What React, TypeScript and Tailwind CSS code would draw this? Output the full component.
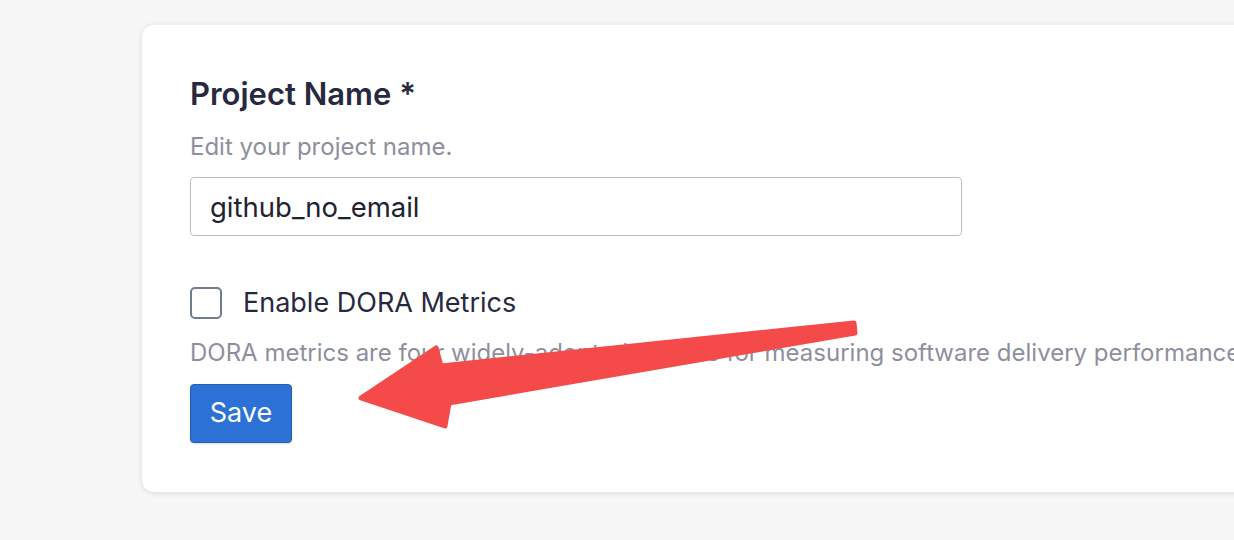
import React from "react";

export default function App() {
  return (
    <div className="relative w-[1234px] h-[540px] overflow-hidden bg-[#f7f7f7] pt-[25px] pl-[142px] font-['Inter',sans-serif]">
      <div className="w-[1200px] h-[467px] rounded-[12px] bg-white shadow-[0_1px_6px_rgba(0,0,0,0.12)] pl-[48px] pt-[50px]">
        <h2 className="text-[31px] leading-[38px] font-semibold text-[#272a3f]">Project Name *</h2>
        <p className="mt-[19px] text-[24px] leading-[30px] text-[#8e8f9c]">Edit your project name.</p>
        <input
          readOnly
          value="github_no_email"
          className="mt-[15px] block w-[772px] h-[59px] rounded-[4px] border border-[#b8bcc4] px-[19px] text-[27.5px] text-[#1f2230] outline-none"
        />
        <label className="mt-[51px] flex items-center gap-[21px]">
          <span className="block w-[32px] h-[32px] rounded-[5px] border-2 border-[#6f7c91] bg-white" />
          <span className="text-[27px] leading-[32px] text-[#272a3f]">Enable DORA Metrics</span>
        </label>
        <p className="mt-[19px] whitespace-nowrap text-[24px] leading-[30px] text-[#8e8f9c]">
          DORA metrics are four widely-adopted metrics for measuring software delivery performance.
        </p>
        <button className="mt-[16px] block h-[59px] w-[102px] rounded-[4px] border border-[#245fb4] bg-[#2c72d6] text-[27px] text-white shadow-[0_1px_2px_rgba(0,0,0,0.15)]">
          Save
        </button>
      </div>

      {/* annotation arrow */}
      <svg className="absolute left-0 top-0 pointer-events-none" width="1234" height="540">
        <polygon
          points="854,323 855,333 449,403 445,426 361,398 436,348 441,366"
          fill="#f54a4a"
          stroke="#f54a4a"
          strokeWidth="5"
          strokeLinejoin="round"
        />
      </svg>
    </div>
  );
}
